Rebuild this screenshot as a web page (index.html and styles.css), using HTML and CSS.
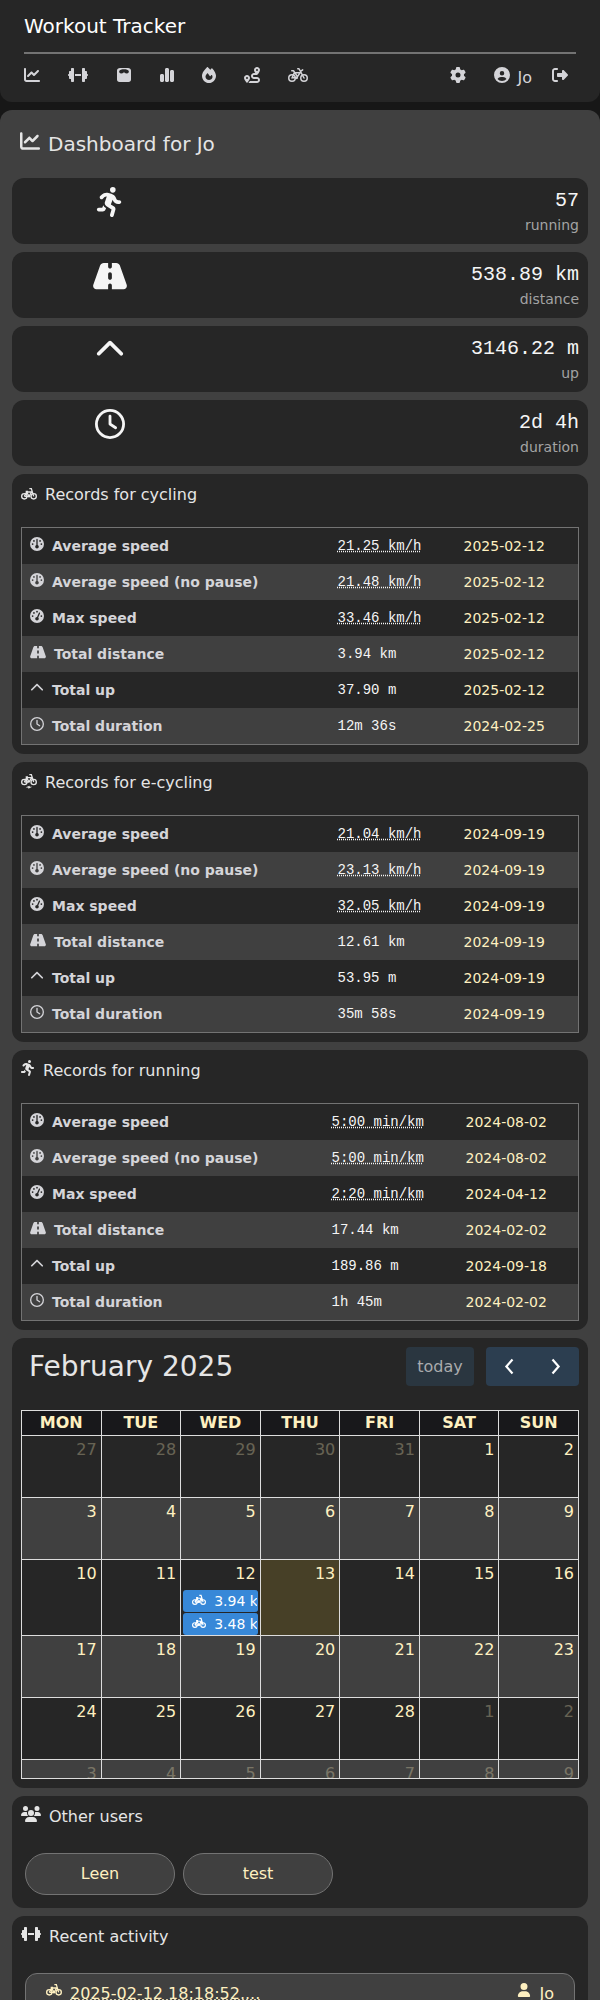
FILE: index.html
```html
<!DOCTYPE html>
<html lang="en">
<head>
<meta charset="utf-8">
<title>Workout Tracker</title>
<link rel="stylesheet" href="styles.css">
</head>
<body>
<svg class="sprite" width="0" height="0">
<symbol id="chart-line" viewBox="0 0 512 512"><path d="M64 64c0-17.7-14.3-32-32-32S0 46.3 0 64V400c0 44.2 35.8 80 80 80H480c17.7 0 32-14.3 32-32s-14.3-32-32-32H80c-8.800 0-16-7.200-16-16V64zm406.600 86.600c12.500-12.500 12.500-32.800 0-45.300s-32.800-12.500-45.300 0L320 210.700l-57.400-57.400c-12.500-12.500-32.800-12.500-45.300 0l-112 112c-12.500 12.500-12.500 32.800 0 45.300s32.800 12.500 45.300 0L240 221.300l57.400 57.400c12.500 12.500 32.800 12.500 45.300 0l128-128z"/></symbol>
<symbol id="dumbbell" viewBox="0 0 640 512"><path d="M96 64c0-17.700 14.300-32 32-32h32c17.700 0 32 14.300 32 32V224v64V448c0 17.700-14.300 32-32 32H128c-17.700 0-32-14.300-32-32V384H64c-17.700 0-32-14.300-32-32V288c-17.700 0-32-14.300-32-32s14.300-32 32-32V160c0-17.700 14.300-32 32-32H96V64zm448 0v64h32c17.700 0 32 14.300 32 32v64c17.700 0 32 14.300 32 32s-14.300 32-32 32v64c0 17.700-14.300 32-32 32H544v64c0 17.700-14.300 32-32 32H480c-17.700 0-32-14.300-32-32V64c0-17.700 14.300-32 32-32h32c17.700 0 32 14.300 32 32zM416 224v64H224V224H416z"/></symbol>
<symbol id="scale" viewBox="0 0 512 512"><path fill-rule="evenodd" d="M128 32H384C437 32 480 61 480 112V400C480 451 451 480 400 480H112C61 480 32 451 32 400V112C32 61 75 32 128 32ZM256 72C180 72 120 88 104 128C88 176 130 208 168 204C196 200 214 188 234 188L256 150L278 188C298 188 316 200 344 204C382 208 424 176 408 128C392 88 332 72 256 72Z"/></symbol>
<symbol id="chart-simple" viewBox="0 0 448 512"><path d="M160 80c0-26.500 21.500-48 48-48h32c26.500 0 48 21.500 48 48V432c0 26.500-21.500 48-48 48H208c-26.500 0-48-21.500-48-48V80zM0 272c0-26.500 21.500-48 48-48H80c26.500 0 48 21.500 48 48V432c0 26.500-21.500 48-48 48H48c-26.500 0-48-21.500-48-48V272zM368 96h32c26.500 0 48 21.500 48 48V432c0 26.500-21.500 48-48 48H368c-26.500 0-48-21.500-48-48V144c0-26.500 21.500-48 48-48z"/></symbol>
<symbol id="fire" viewBox="0 0 448 512"><path d="M159.300 5.400c7.800-7.300 19.900-7.200 27.700 .1c27.600 25.900 53.500 53.800 77.700 84c11-14.400 23.500-30.100 37-42.900c7.900-7.400 20.100-7.400 28 .1c34.600 33 63.900 76.600 84.500 118c20.300 40.800 33.800 82.500 33.800 111.900C448 404.200 348.200 512 224 512C98.400 512 0 404.100 0 276.500c0-38.400 17.800-85.300 45.400-131.700C73.300 97.700 112.700 48.600 159.300 5.400zM225.700 416c25.300 0 47.700-7 68.800-21c42.100-29.400 53.400-88.200 28.100-134.400c-4.500-9-16-9.600-22.500-2l-25.200 29.300c-6.600 7.600-18.500 7.400-24.700-.5c-16.500-21-46-58.500-62.800-79.800c-6.300-8-18.300-8.100-24.700-.1c-33.800 42.500-50.800 69.300-50.800 99.400C112 375.400 162.600 416 225.700 416z"/></symbol>
<symbol id="route" viewBox="0 0 512 512"><path d="M512 96c0 50.200-59.100 125.100-84.600 155c-3.800 4.400-9.400 6.100-14.500 5H320c-17.700 0-32 14.300-32 32s14.300 32 32 32h96c53 0 96 43 96 96s-43 96-96 96H139.600c8.700-9.900 19.300-22.600 30-36.800c6.300-8.400 12.800-17.600 19-27.200H416c17.700 0 32-14.300 32-32s-14.300-32-32-32H320c-53 0-96-43-96-96s43-96 96-96h39.800c-21-31.500-39.800-67.700-39.800-96c0-53 43-96 96-96s96 43 96 96zM117.100 489.100c-3.800 4.300-7.200 8.100-10.100 11.300l-1.800 2-.2-.2c-6 4.600-14.600 4-20-1.800C59.800 473 0 402.500 0 352c0-53 43-96 96-96s96 43 96 96c0 30-21.100 67-43.500 97.900c-10.700 14.700-21.700 28-30.800 38.500l-.6 .7zM128 352a32 32 0 1 0 -64 0 32 32 0 1 0 64 0zM416 128a32 32 0 1 0 0-64 32 32 0 1 0 0 64z"/></symbol>
<symbol id="bicycle" viewBox="0 0 640 512"><g fill="none" stroke="currentColor" stroke-width="48" stroke-linecap="round" stroke-linejoin="round"><circle cx="128" cy="352" r="104"/><circle cx="512" cy="352" r="104"/><path d="M312 56H352L512 352M120 120H176L276 270M128 352L204 180H392L276 344H128M410 130L470 90"/></g><circle cx="276" cy="344" r="44"/></symbol>
<symbol id="gear" viewBox="0 0 512 512"><path d="M495.900 166.600c3.200 8.700 .5 18.400-6.400 24.600l-43.300 39.400c1.100 8.300 1.700 16.800 1.700 25.400s-.6 17.100-1.700 25.400l43.300 39.400c6.900 6.200 9.600 15.900 6.400 24.600c-4.400 11.900-9.700 23.300-15.800 34.300l-4.700 8.100c-6.600 11-14 21.400-22.100 31.200c-5.900 7.200-15.700 9.600-24.500 6.800l-55.700-17.700c-13.400 10.300-28.200 18.900-44 25.400l-12.500 57.100c-2 9.100-9 16.300-18.200 17.800c-13.800 2.300-28 3.500-42.500 3.500s-28.700-1.200-42.500-3.500c-9.200-1.500-16.200-8.700-18.200-17.800l-12.500-57.100c-15.800-6.500-30.600-15.100-44-25.400L83.100 425.900c-8.800 2.800-18.600 .3-24.500-6.800c-8.100-9.800-15.500-20.200-22.100-31.200l-4.700-8.100c-6.100-11-11.400-22.400-15.800-34.300c-3.200-8.700-.5-18.400 6.400-24.600l43.300-39.400C64.600 273.100 64 264.600 64 256s.6-17.100 1.700-25.400L22.400 191.200c-6.900-6.200-9.600-15.900-6.400-24.600c4.400-11.900 9.700-23.300 15.800-34.300l4.700-8.100c6.600-11 14-21.400 22.100-31.200c5.900-7.200 15.700-9.600 24.500-6.800l55.700 17.700c13.400-10.300 28.200-18.900 44-25.400l12.500-57.100c2-9.100 9-16.300 18.200-17.800C227.300 1.200 241.500 0 256 0s28.700 1.200 42.500 3.500c9.200 1.500 16.200 8.700 18.200 17.800l12.500 57.100c15.800 6.500 30.600 15.100 44 25.400l55.700-17.700c8.800-2.800 18.600-.3 24.500 6.800c8.100 9.800 15.500 20.200 22.100 31.200l4.700 8.100c6.100 11 11.400 22.400 15.800 34.300zM256 336a80 80 0 1 0 0-160 80 80 0 1 0 0 160z"/></symbol>
<symbol id="circle-user" viewBox="0 0 512 512"><path d="M399 384.200C376.900 345.800 335.400 320 288 320H224c-47.400 0-88.900 25.800-111 64.200c35.200 39.200 86.200 63.800 143 63.800s107.800-24.700 143-63.800zM0 256a256 256 0 1 1 512 0A256 256 0 1 1 0 256zm256 16a72 72 0 1 0 0-144 72 72 0 1 0 0 144z"/></symbol>
<symbol id="logout" viewBox="0 0 512 512"><path d="M377.900 105.900L500.700 228.700c7.200 7.200 11.300 17.100 11.300 27.300s-4.100 20.100-11.300 27.300L377.900 406.100c-6.400 6.400-15 9.900-24 9.900c-18.700 0-33.900-15.200-33.900-33.900l0-62.100-128 0c-17.700 0-32-14.300-32-32l0-64c0-17.700 14.300-32 32-32l128 0 0-62.100c0-18.700 15.200-33.900 33.900-33.900c9 0 17.600 3.600 24 9.900zM160 96L96 96c-17.700 0-32 14.300-32 32l0 256c0 17.700 14.300 32 32 32l64 0c17.700 0 32 14.300 32 32s-14.300 32-32 32l-64 0c-53 0-96-43-96-96L0 128C0 75 43 32 96 32l64 0c17.700 0 32 14.300 32 32s-14.300 32-32 32z"/></symbol>
<symbol id="running" viewBox="0 0 448 512"><path d="M320 48a48 48 0 1 0 -96 0 48 48 0 1 0 96 0zM125.700 175.500c9.900-9.900 23.400-15.500 37.500-15.500c1.900 0 3.800 .1 5.600 .3L137.600 254c-9.300 28 1.700 58.800 26.800 74.500l86.200 53.900-25.400 88.800c-4.900 17 5 34.700 22 39.600s34.700-5 39.600-22l28.700-100.400c5.900-20.600-2.600-42.600-20.700-53.900L238 299l30.900-82.400 5.100 12.300C289 264.700 323.900 288 362.700 288H384c17.700 0 32-14.300 32-32s-14.300-32-32-32H362.700c-12.900 0-24.600-7.800-29.500-19.700l-6.300-15c-14.600-35.100-44.100-61.900-80.500-73.100l-48.700-15c-11.100-3.400-22.700-5.200-34.400-5.200c-31 0-60.800 12.300-82.700 34.300L57.400 153.400c-12.500 12.500-12.500 32.800 0 45.300s32.800 12.500 45.300 0l23.100-23.100zM91.200 352H32c-17.700 0-32 14.300-32 32s14.300 32 32 32h69.600c19 0 36.200-11.200 43.900-28.500L157 361.600l-9.500-6c-17.500-10.900-30.500-26.800-37.900-44.900L91.200 352z"/></symbol>
<symbol id="road" viewBox="0 0 576 512"><path d="M256 32H181.200c-27.100 0-51.300 17.100-60.300 42.600L3.100 407.200C1.100 413 0 419.200 0 425.400C0 455.500 24.500 480 54.600 480H256V416c0-17.700 14.300-32 32-32s32 14.300 32 32v64H521.400c30.200 0 54.600-24.500 54.600-54.600c0-6.200-1.100-12.400-3.100-18.200L455.100 74.600C446 49.100 421.900 32 394.800 32H320V96c0 17.700-14.300 32-32 32s-32-14.300-32-32V32zm64 192v64c0 17.700-14.300 32-32 32s-32-14.300-32-32V224c0-17.700 14.300-32 32-32s32 14.300 32 32z"/></symbol>
<symbol id="up" viewBox="0 0 512 512"><path d="M233.400 105.400c12.500-12.500 32.800-12.500 45.300 0l192 192c12.500 12.500 12.500 32.800 0 45.300s-32.800 12.500-45.300 0L256 173.300 86.600 342.600c-12.500 12.500-32.800 12.500-45.300 0s-12.500-32.800 0-45.300l192-192z"/></symbol>
<symbol id="clock" viewBox="0 0 512 512"><path d="M464 256A208 208 0 1 1 48 256a208 208 0 1 1 416 0zM0 256a256 256 0 1 0 512 0A256 256 0 1 0 0 256zM232 120V256c0 8 4 15.500 10.700 20l96 64c11 7.400 25.900 4.400 33.300-6.700s4.400-25.900-6.700-33.300L280 243.200V120c0-13.300-10.700-24-24-24s-24 10.700-24 24z"/></symbol>
<symbol id="gauge" viewBox="0 0 512 512"><path d="M0 256a256 256 0 1 1 512 0A256 256 0 1 1 0 256zm320 96c0-26.900-16.500-49.900-40-59.300V88c0-13.300-10.700-24-24-24s-24 10.700-24 24V292.700c-23.500 9.500-40 32.500-40 59.300c0 35.300 28.700 64 64 64s64-28.700 64-64zM144 176a32 32 0 1 0 0-64 32 32 0 1 0 0 64zm-16 80a32 32 0 1 0 -64 0 32 32 0 1 0 64 0zm288 32a32 32 0 1 0 0-64 32 32 0 1 0 0 64zM400 144a32 32 0 1 0 -64 0 32 32 0 1 0 64 0z"/></symbol>
<symbol id="gauge-high" viewBox="0 0 512 512"><path d="M0 256a256 256 0 1 1 512 0A256 256 0 1 1 0 256zM288 96a32 32 0 1 0 -64 0 32 32 0 1 0 64 0zM256 416c35.300 0 64-28.700 64-64c0-17.400-6.900-33.100-18.100-44.600L366 161.700c5.300-12.100-.2-26.300-12.300-31.600s-26.300 .2-31.600 12.300L257.900 288c-.6 0-1.300 0-1.900 0c-35.300 0-64 28.700-64 64s28.700 64 64 64zM176 144a32 32 0 1 0 -64 0 32 32 0 1 0 64 0zM96 288a32 32 0 1 0 0-64 32 32 0 1 0 0 64zm352-32a32 32 0 1 0 -64 0 32 32 0 1 0 64 0z"/></symbol>
<symbol id="cycling" viewBox="0 0 24 24"><g fill="none" stroke="currentColor" stroke-width="2"><circle cx="5" cy="15.500" r="4"/><circle cx="19" cy="15.500" r="4"/><path d="M5 15.500L8.500 9H16L12 15.500H5M19 15.500L15.500 4H12.500M7 8H10.500M8.500 9L12 15.500"/></g><circle cx="12" cy="15.500" r="1.800"/></symbol>
<symbol id="ecycling" viewBox="0 0 24 24"><g fill="none" stroke="currentColor" stroke-width="2"><circle cx="5" cy="12" r="4"/><circle cx="19" cy="12" r="4"/><path d="M5 12L8.500 5.500H16L12 12H5M19 12L15.500 1H12.500M7 4.500H10.500M8.500 5.500L12 12"/></g><path d="M7 20L13 17.500V19.200H17L11 22V20.500Z"/></symbol>
<symbol id="users" viewBox="0 0 640 512"><path d="M144 0a80 80 0 1 1 0 160A80 80 0 1 1 144 0zM512 0a80 80 0 1 1 0 160A80 80 0 1 1 512 0zM0 298.700C0 239.800 47.800 192 106.700 192h42.700c15.900 0 31 3.500 44.600 9.700c-1.300 7.200-1.900 14.700-1.900 22.300c0 38.200 16.800 72.500 43.300 96H21.300C9.600 320 0 310.400 0 298.700zM404.600 320c26.600-23.500 43.300-57.800 43.300-96c0-7.600-.7-15-1.900-22.300c13.600-6.300 28.700-9.700 44.600-9.700h42.700C592.200 192 640 239.800 640 298.700c0 11.800-9.600 21.300-21.300 21.300H404.600zM224 224a96 96 0 1 1 192 0 96 96 0 1 1 -192 0zM128 485.300C128 411.700 187.700 352 261.300 352H378.700C452.300 352 512 411.700 512 485.300c0 14.700-11.900 26.700-26.700 26.700H154.700c-14.700 0-26.700-11.900-26.700-26.700z"/></symbol>
<symbol id="user" viewBox="0 0 448 512"><path d="M224 256A128 128 0 1 0 224 0a128 128 0 1 0 0 256zm-45.700 48C79.800 304 0 383.800 0 482.300C0 498.700 13.300 512 29.700 512H418.300c16.400 0 29.700-13.300 29.700-29.700C448 383.800 368.200 304 269.700 304H178.300z"/></symbol>
</svg>
<div class="page">
<header class="header">
  <div class="brand">Workout Tracker</div>
  <nav class="nav">
    <svg class="i16"><use href="#chart-line"/></svg>
    <svg class="i20"><use href="#dumbbell"/></svg>
    <svg class="i16"><use href="#scale"/></svg>
    <svg class="i14w"><use href="#chart-simple"/></svg>
    <svg class="i14w"><use href="#fire"/></svg>
    <svg class="i16"><use href="#route"/></svg>
    <svg class="i20"><use href="#bicycle"/></svg>
    <svg class="i16 push"><use href="#gear"/></svg>
    <span class="me"><svg class="i16"><use href="#circle-user"/></svg><span>Jo</span></span>
    <svg class="i16 out"><use href="#logout"/></svg>
  </nav>
</header>
<main class="main">
  <h1 class="title"><svg><use href="#chart-line"/></svg>Dashboard for Jo</h1>

  <section class="card stat"><div class="stat-icon"><svg><use href="#running"/></svg></div><div class="stat-text"><div class="num">57</div><div class="cap">running</div></div></section>
  <section class="card stat"><div class="stat-icon"><svg><use href="#road"/></svg></div><div class="stat-text"><div class="num">538.89 km</div><div class="cap">distance</div></div></section>
  <section class="card stat"><div class="stat-icon"><svg><use href="#up"/></svg></div><div class="stat-text"><div class="num">3146.22 m</div><div class="cap">up</div></div></section>
  <section class="card stat"><div class="stat-icon"><svg><use href="#clock"/></svg></div><div class="stat-text"><div class="num">2d 4h</div><div class="cap">duration</div></div></section>

  <section class="card records">
    <h2><svg class="i16"><use href="#cycling"/></svg>Records for cycling</h2>
    <div class="table">
      <div class="row"><b><svg><use href="#gauge"/></svg>Average speed</b><span class="val"><abbr>21.25 km/h</abbr></span><a>2025-02-12</a></div>
      <div class="row"><b><svg><use href="#gauge"/></svg>Average speed (no pause)</b><span class="val"><abbr>21.48 km/h</abbr></span><a>2025-02-12</a></div>
      <div class="row"><b><svg><use href="#gauge-high"/></svg>Max speed</b><span class="val"><abbr>33.46 km/h</abbr></span><a>2025-02-12</a></div>
      <div class="row"><b><svg class="wide"><use href="#road"/></svg>Total distance</b><span class="val">3.94 km</span><a>2025-02-12</a></div>
      <div class="row"><b><svg><use href="#up"/></svg>Total up</b><span class="val">37.90 m</span><a>2025-02-12</a></div>
      <div class="row"><b><svg><use href="#clock"/></svg>Total duration</b><span class="val">12m 36s</span><a>2024-02-25</a></div>
    </div>
  </section>

  <section class="card records">
    <h2><svg class="i16"><use href="#ecycling"/></svg>Records for e-cycling</h2>
    <div class="table">
      <div class="row"><b><svg><use href="#gauge"/></svg>Average speed</b><span class="val"><abbr>21.04 km/h</abbr></span><a>2024-09-19</a></div>
      <div class="row"><b><svg><use href="#gauge"/></svg>Average speed (no pause)</b><span class="val"><abbr>23.13 km/h</abbr></span><a>2024-09-19</a></div>
      <div class="row"><b><svg><use href="#gauge-high"/></svg>Max speed</b><span class="val"><abbr>32.05 km/h</abbr></span><a>2024-09-19</a></div>
      <div class="row"><b><svg class="wide"><use href="#road"/></svg>Total distance</b><span class="val">12.61 km</span><a>2024-09-19</a></div>
      <div class="row"><b><svg><use href="#up"/></svg>Total up</b><span class="val">53.95 m</span><a>2024-09-19</a></div>
      <div class="row"><b><svg><use href="#clock"/></svg>Total duration</b><span class="val">35m 58s</span><a>2024-09-19</a></div>
    </div>
  </section>

  <section class="card records run">
    <h2><svg class="i14w"><use href="#running"/></svg>Records for running</h2>
    <div class="table">
      <div class="row"><b><svg><use href="#gauge"/></svg>Average speed</b><span class="val"><abbr>5:00 min/km</abbr></span><a>2024-08-02</a></div>
      <div class="row"><b><svg><use href="#gauge"/></svg>Average speed (no pause)</b><span class="val"><abbr>5:00 min/km</abbr></span><a>2024-08-02</a></div>
      <div class="row"><b><svg><use href="#gauge-high"/></svg>Max speed</b><span class="val"><abbr>2:20 min/km</abbr></span><a>2024-04-12</a></div>
      <div class="row"><b><svg class="wide"><use href="#road"/></svg>Total distance</b><span class="val">17.44 km</span><a>2024-02-02</a></div>
      <div class="row"><b><svg><use href="#up"/></svg>Total up</b><span class="val">189.86 m</span><a>2024-09-18</a></div>
      <div class="row"><b><svg><use href="#clock"/></svg>Total duration</b><span class="val">1h 45m</span><a>2024-02-02</a></div>
    </div>
  </section>

  <section class="card calendar">
    <div class="cal-bar">
      <div class="month">February 2025</div>
      <div class="today">today</div>
      <div class="arrows"><svg viewBox="0 0 16 24"><path d="M12 4L5 12L12 20"/></svg><svg viewBox="0 0 16 24"><path d="M4 4L11 12L4 20"/></svg></div>
    </div>
    <div class="grid">
      <div class="dow">MON</div><div class="dow">TUE</div><div class="dow">WED</div><div class="dow">THU</div><div class="dow">FRI</div><div class="dow">SAT</div><div class="dow">SUN</div>
      <div class="day"><i>27</i></div><div class="day"><i>28</i></div><div class="day"><i>29</i></div><div class="day"><i>30</i></div><div class="day"><i>31</i></div><div class="day">1</div><div class="day">2</div>
      <div class="day alt">3</div><div class="day alt">4</div><div class="day alt">5</div><div class="day alt">6</div><div class="day alt">7</div><div class="day alt">8</div><div class="day alt">9</div>
      <div class="day">10</div><div class="day">11</div><div class="day">12<div class="event"><svg><use href="#cycling"/></svg>3.94 km</div><div class="event"><svg><use href="#cycling"/></svg>3.48 km</div></div><div class="day now">13</div><div class="day">14</div><div class="day">15</div><div class="day">16</div>
      <div class="day alt">17</div><div class="day alt">18</div><div class="day alt">19</div><div class="day alt">20</div><div class="day alt">21</div><div class="day alt">22</div><div class="day alt">23</div>
      <div class="day">24</div><div class="day">25</div><div class="day">26</div><div class="day">27</div><div class="day">28</div><div class="day"><i>1</i></div><div class="day"><i>2</i></div>
      <div class="day alt"><i>3</i></div><div class="day alt"><i>4</i></div><div class="day alt"><i>5</i></div><div class="day alt"><i>6</i></div><div class="day alt"><i>7</i></div><div class="day alt"><i>8</i></div><div class="day alt"><i>9</i></div>
    </div>
  </section>

  <section class="card others">
    <h2><svg class="i20"><use href="#users"/></svg>Other users</h2>
    <div class="chips"><a class="chip">Leen</a><a class="chip">test</a></div>
  </section>

  <section class="card recent">
    <h2><svg class="i20"><use href="#dumbbell"/></svg>Recent activity</h2>
    <div class="item"><svg class="i16"><use href="#cycling"/></svg><abbr>2025-02-12 18:18:52....</abbr><svg class="who"><use href="#user"/></svg><span>Jo</span></div>
  </section>
</main>
</div>
</body>
</html>
```
FILE: styles.css
```css
* { box-sizing: border-box; }
body { margin: 0; background: #171717; color: #e5e5e5; font: 16px/24px "DejaVu Sans", sans-serif; }
svg { fill: currentColor; flex: none; display: block; }
.sprite { position: absolute; }
.page { height: 2000px; overflow: hidden; display: flex; flex-direction: column; gap: 8px; }
.i16 { width: 16px; height: 16px; }
.i20 { width: 20px; height: 16px; }
.i14w { width: 14px; height: 16px; }

.header { flex: none; height: 102px; padding: 12px 24px 0; background: #262626; border-radius: 0 0 12px 12px; }
.brand { height: 42px; border-bottom: 2px solid #737373; font-size: 20px; line-height: 28px; color: #fff; }
.nav { display: flex; align-items: flex-start; gap: 28px; padding-top: 13px; color: #d4d4d8; }
.push { margin-left: auto; }
.me { display: flex; gap: 7px; }
.me span { line-height: 22px; }
.out { margin: 0 8px 0 -8px; }

.main { flex: none; display: flex; flex-direction: column; gap: 8px; padding: 0 12px; height: 1960px; background: #404040; border-radius: 12px 12px 0 0; }
.title { display: flex; gap: 8px; height: 60px; margin: 0; padding: 21px 8px 0; font-size: 20px; line-height: 26px; font-weight: 400; }
.title svg { width: 20px; height: 20px; }

.card { flex: none; background: #262626; border-radius: 12px; padding: 8px 9px; }
.stat { height: 66px; display: flex; justify-content: space-between; }
.stat-icon { width: 178px; padding-top: 1px; display: flex; justify-content: center; color: #f5f5f5; }
.stat-icon svg { width: 34px; height: 30px; }
.stat-text { text-align: right; padding-top: 1px; }
.num { font: 20px/28px "Liberation Mono", monospace; color: #f5f5f5; }
.cap { font-size: 14px; line-height: 20px; color: #a3a3a3; }

h2 { display: flex; gap: 8px; height: 45px; margin: 0; font-size: 16px; line-height: 26px; font-weight: 400; }
h2 svg { margin-top: 3px; }
.records { height: 280px; }
.records h2 svg { margin-top: 4px; }
.run h2 svg { margin-top: 2px; }
.table { border: 1px solid #737373; font-size: 14px; line-height: 36px; }
.row { display: grid; grid-template-columns: 307.500px 126px 1fr; height: 36px; padding-left: 8px; }
.run .row { grid-template-columns: 301.500px 134px 1fr; }
.row:nth-child(even) { background: #404040; }
.row b { display: flex; gap: 8px; color: #d4d4d8; }
.row svg { width: 14px; height: 14px; margin-top: 9px; }
.row svg.wide { width: 16px; }
.val { font-family: "Liberation Mono", monospace; color: #f5f5f5; }
abbr { text-decoration: underline dotted; }
a { color: #fef0c0; }

.calendar { height: 450px; }
.cal-bar { display: flex; height: 64px; align-items: flex-start; padding-top: 1px; }
.month { flex: 1; padding-left: 8px; font-size: 28px; line-height: 40px; }
.today { width: 68px; height: 39px; border-radius: 4px; background: #2a3640; color: #a9abad; text-align: center; line-height: 40px; }
.arrows { display: flex; justify-content: space-around; align-items: center; width: 93px; height: 39px; margin-left: 12px; border-radius: 4px; background: #2c3e50; }
.arrows svg { width: 14px; height: 21px; fill: none; stroke: #fff; stroke-width: 2.500; }
.grid { display: grid; grid-template-columns: repeat(7, 1fr); grid-template-rows: 24px 61px 61px 75px 61px 61px 18px; gap: 1px; padding: 1px; background: #ddd; color: #fef0c0; }
.dow { background: #18181b; text-align: center; font-weight: 700; line-height: 24px; }
.day { min-width: 0; overflow: hidden; background: #262626; padding: 0 4px 0 2px; text-align: right; line-height: 27px; }
.day i { font-style: normal; opacity: .3; }
.alt { background: #404040; }
.now { background: #474027; }
.event { display: flex; gap: 8px; height: 22px; width: 75px; margin: 3px 0 1px; padding-left: 9px; overflow: hidden; border-radius: 3px; background: #3788d8; color: #fff; font-size: 14px; line-height: 22px; white-space: nowrap; border-right: 1px solid #3788d8; }
.event + .event { margin-top: 0; }
.event svg { width: 14px; height: 14px; margin-top: 3px; }

.others { height: 112px; }
.others h2 { height: 49px; }
.others h2 svg { margin-top: 2px; }
.chips { display: flex; gap: 8px; padding-left: 4px; }
.chip { width: 150px; height: 42px; border: 1px solid #737373; border-radius: 21px; background: #404040; text-align: center; line-height: 39px; }

.recent { height: 140px; }
.recent h2 { height: 49px; }
.recent h2 svg { margin-top: 2px; }
.item { display: flex; margin: 0 4px; height: 80px; padding: 8px 20px; gap: 8px; border: 1px solid #737373; border-radius: 12px; background: #404040; color: #fef0c0; }
.item .who { width: 14px; height: 14px; margin-left: auto; margin-top: 1px; }
```
